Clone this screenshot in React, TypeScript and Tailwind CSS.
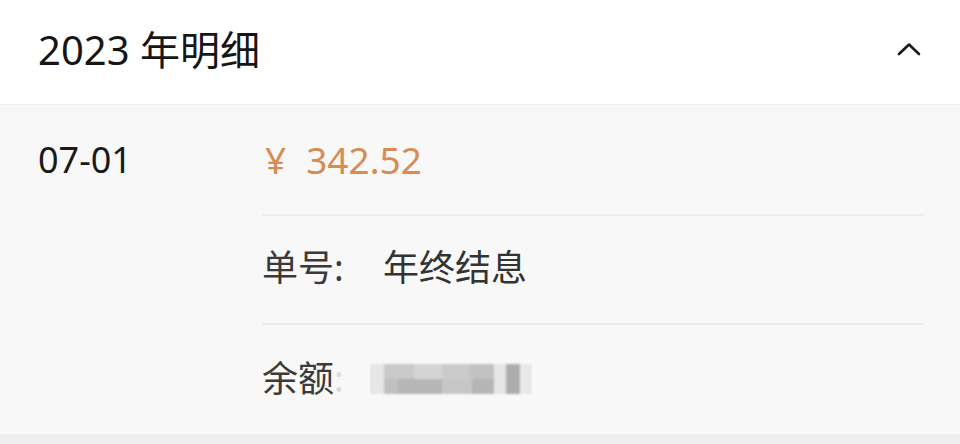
import React from "react"

const font = { fontFamily: '"Noto Sans", "Noto Sans CJK SC", sans-serif' }

// pixelated (mosaic) cells covering the hidden balance
const cells: [number, number, number, number, string][] = [
  [0, 0, 14, 30, "#e6e6e6"],
  [14, 0, 30, 15, "#c9c9c9"],
  [44, 0, 28, 15, "#d4d4d4"],
  [72, 0, 28, 15, "#cbcbcb"],
  [100, 0, 24, 15, "#c2c2c2"],
  [14, 15, 14, 15, "#c0c0c0"],
  [28, 15, 44, 15, "#b6b6b6"],
  [72, 15, 30, 15, "#c6c6c6"],
  [102, 15, 22, 15, "#b5b5b5"],
  [124, 0, 12, 30, "#e6e6e6"],
  [136, 0, 14, 30, "#adadad"],
  [150, 0, 12, 30, "#e8e8e8"],
]

function Mosaic() {
  return (
    <svg width="162" height="36" viewBox="0 0 162 36" className="block">
      <defs>
        <filter id="soft" x="-10%" y="-20%" width="120%" height="140%">
          <feGaussianBlur stdDeviation="1.2" />
        </filter>
      </defs>
      <g filter="url(#soft)">
        {cells.map(([x, y, w, h, c], i) => (
          <rect key={i} x={x} y={y + 3} width={w} height={h} fill={c} />
        ))}
      </g>
    </svg>
  )
}

export default function App() {
  return (
    <div className="w-[960px] h-[444px] overflow-hidden bg-[#f8f8f8]" style={font}>
      {/* Header */}
      <div className="h-[105px] bg-white flex items-center justify-between pl-[38px] pr-[38px] border-b border-[#efefef]">
        <span className="text-[40px] leading-none text-[#161616] -mt-[4px]">2023 年明细</span>
        <svg width="26" height="16" viewBox="0 0 26 16" className="-mt-[6px]">
          <polyline
            points="3,13 13,3.5 23,13"
            fill="none"
            stroke="#1a1a1a"
            strokeWidth="2.6"
            strokeLinecap="round"
            strokeLinejoin="round"
          />
        </svg>
      </div>

      {/* Entry */}
      <div className="flex h-[329px]">
        <div className="w-[262px] pl-[38px] h-[110px] flex items-center">
          <span className="text-[36px] leading-none text-[#1a1a1a]">07-01</span>
        </div>
        <div className="flex-1 mr-[36px] flex flex-col">
          <div className="h-[111px] flex items-center border-b-2 border-[#ececec]">
            <span className="text-[37px] leading-none text-[#d68c52] pl-[3px]">
              <span className="mr-[20px]">¥</span>342.52
            </span>
          </div>
          <div className="h-[109px] flex items-center border-b-2 border-[#ececec]">
            <span className="w-[121px] text-[36px] leading-none text-[#3a3a3a] -mt-[4px]">单号:</span>
            <span className="text-[36px] leading-none text-[#333333] -mt-[4px]">年终结息</span>
          </div>
          <div className="h-[107px] flex items-center">
            <span className="w-[108px] text-[36px] leading-none text-[#3a3a3a]">
              余额<span className="text-[#dcdcdc]">:</span>
            </span>
            <Mosaic />
          </div>
        </div>
      </div>

      <div className="h-[10px] bg-[#efefef]" />
    </div>
  )
}
